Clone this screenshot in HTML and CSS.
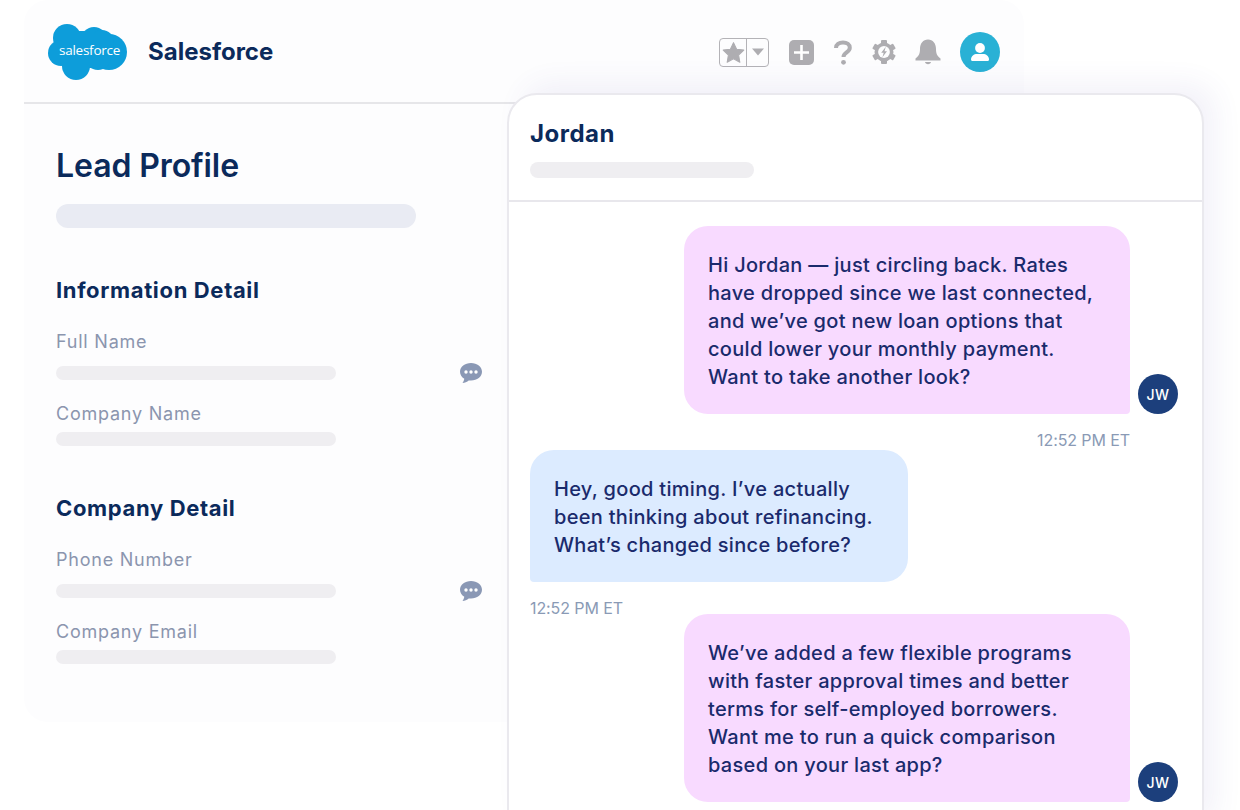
FILE: index.html
```html
<!DOCTYPE html>
<html lang="en">
<head>
<meta charset="utf-8">
<title>Lead Profile</title>
<link rel="stylesheet" href="styles.css">
</head>
<body>
<div class="stage">
  <div class="crm">
    <header class="crm-head">
      <div class="logo">
        <svg viewBox="0 0 80 56" width="80" height="56" aria-hidden="true"><g fill="#0d9dda"><circle cx="19" cy="14" r="14"/><circle cx="46" cy="16" r="13"/><circle cx="61" cy="28" r="18"/><circle cx="28" cy="42" r="14"/><circle cx="13" cy="29" r="13"/><circle cx="50" cy="33" r="13"/><circle cx="54" cy="18" r="12"/><rect x="19" y="7" width="27" height="37"/><rect x="14" y="12" width="40" height="30"/></g></svg>
        <span class="logo-word">salesforce</span>
      </div>
      <div class="brand">Salesforce</div>
      <nav class="tools">
        <div class="fav">
          <span class="fav-star"><svg viewBox="0 0 24 24" width="25" height="25"><path fill="#aeadb1" stroke="#aeadb1" stroke-width="1" stroke-linejoin="round" d="M12 2.500l3 6.300 6.900.9-5 4.800 1.200 6.900-6.100-3.300-6.100 3.300 1.200-6.900-5-4.800 6.900-.9z"/></svg></span>
          <span class="fav-drop"><svg viewBox="0 0 14 10" width="14" height="10"><path fill="#aeadb1" d="M1 1.500h12L7 8.500z"/></svg></span>
        </div>
        <svg class="tool-plus" viewBox="0 0 25 25" width="25" height="25"><rect width="25" height="25" rx="5" fill="#aeadb1"/><path d="M12.500 5v15M5 12.500h15" stroke="#fff" stroke-width="2.600"/></svg>
        <svg class="tool-help" viewBox="0 0 20 28" width="20" height="28"><path d="M3 10C3 6.300 6 4.500 10 4.500c4 0 6.800 1.900 6.800 5.300 0 4.600-6.300 4.700-6.300 9.200" fill="none" stroke="#aeadb1" stroke-width="4"/><circle cx="10.500" cy="24.300" r="2.400" fill="#aeadb1"/></svg>
        <svg class="tool-gear" viewBox="0 0 26 26" width="26" height="26"><g fill="#aeadb1"><rect x="10" y="1" width="6" height="24" rx="1"/><rect x="10" y="1" width="6" height="24" rx="1" transform="rotate(60 13 13)"/><rect x="10" y="1" width="6" height="24" rx="1" transform="rotate(120 13 13)"/></g><circle cx="13" cy="13" r="7.700" fill="none" stroke="#aeadb1" stroke-width="3.600"/><circle cx="13" cy="13" r="5.900" fill="#fdfdfe"/><path fill="#aeadb1" d="M14.800 7.800l-4.600 6h2.500l-1.300 4.400 4.600-6h-2.500z"/></svg>
        <svg class="tool-bell" viewBox="0 0 26 26" width="26" height="26"><path fill="#aeadb1" d="M13 .5c4.900 0 8 4 8 9.500 0 4.500 1 7 4.500 9.500v2H.5v-2C4 17 5 14.500 5 10 5 4.500 8.100.5 13 .5z"/><path fill="#aeadb1" d="M10 23h6c-.3 1.300-1.400 2.200-3 2.200s-2.700-.9-3-2.200z"/></svg>
        <span class="user"><svg viewBox="0 0 24 24" width="24" height="24"><circle cx="12" cy="8" r="4.900" fill="#fff"/><path fill="#fff" d="M3 19.500c0-3.500 3-5.500 6-5.500h6c3 0 6 2 6 5.500 0 .8-.5 1.500-1.500 1.500h-15C3.500 21 3 20.300 3 19.500z"/></svg></span>
      </nav>
    </header>
    <main class="profile">
      <h1 class="profile-title">Lead Profile</h1>
      <div class="bar bar-lead"></div>

      <h2 class="section first">Information Detail</h2>
      <div class="label first-label">Full Name</div>
      <div class="field">
        <div class="bar bar-field"></div>
        <svg class="note" viewBox="0 0 24 23" width="24" height="23"><path fill="#8a98b5" d="M12 1C5.900 1 1 4.900 1 9.800c0 2.900 1.700 5.400 4.300 7-.2 1.500-.9 3-1.800 4.200 2.200-.2 4.600-1.400 6.200-2.600.7.100 1.500.2 2.300.2 6.100 0 11-3.900 11-8.800S18.100 1 12 1z"/><circle cx="7" cy="10" r="1.700" fill="#fff"/><circle cx="12" cy="10" r="1.700" fill="#fff"/><circle cx="17" cy="10" r="1.700" fill="#fff"/></svg>
      </div>
      <div class="label">Company Name</div>
      <div class="bar bar-field tight"></div>

      <h2 class="section">Company Detail</h2>
      <div class="label first-label">Phone Number</div>
      <div class="field">
        <div class="bar bar-field"></div>
        <svg class="note" viewBox="0 0 24 23" width="24" height="23"><path fill="#8a98b5" d="M12 1C5.900 1 1 4.900 1 9.800c0 2.900 1.700 5.400 4.300 7-.2 1.500-.9 3-1.800 4.200 2.200-.2 4.600-1.400 6.200-2.600.7.100 1.500.2 2.300.2 6.100 0 11-3.900 11-8.800S18.100 1 12 1z"/><circle cx="7" cy="10" r="1.700" fill="#fff"/><circle cx="12" cy="10" r="1.700" fill="#fff"/><circle cx="17" cy="10" r="1.700" fill="#fff"/></svg>
      </div>
      <div class="label">Company Email</div>
      <div class="bar bar-field tight"></div>
    </main>
  </div>

  <section class="chat">
    <header class="chat-head">
      <div class="chat-name">Jordan</div>
      <div class="bar bar-sub"></div>
    </header>
    <div class="thread">
      <div class="row out">
        <div class="bubble bubble-out">Hi Jordan — just circling back. Rates<br>have dropped since we last connected,<br>and we’ve got new loan options that<br>could lower your monthly payment.<br>Want to take another look?</div>
        <span class="avatar">JW</span>
      </div>
      <div class="stamp stamp-out">12:52 PM ET</div>
      <div class="row in">
        <div class="bubble bubble-in">Hey, good timing. I’ve actually<br>been thinking about refinancing.<br>What’s changed since before?</div>
      </div>
      <div class="stamp stamp-in">12:52 PM ET</div>
      <div class="row out">
        <div class="bubble bubble-out">We’ve added a few flexible programs<br>with faster approval times and better<br>terms for self-employed borrowers.<br>Want me to run a quick comparison<br>based on your last app?</div>
        <span class="avatar">JW</span>
      </div>
    </div>
  </section>
</div>
</body>
</html>
```
FILE: styles.css
```css
* { box-sizing: border-box; }
html, body { margin: 0; height: 100%; overflow: hidden; background: #fff; }
body { font-family: Inter, "Liberation Sans", sans-serif; }

.stage { position: relative; width: 1240px; height: 810px; padding-left: 24px; overflow: hidden; }

.crm { width: 1000px; height: 722px; background: #fdfdfe; border-radius: 24px; }
.crm-head { display: flex; align-items: center; height: 104px; padding: 2px 24px 0; border-bottom: 2px solid #e6e6e9; }
.logo { position: relative; width: 80px; height: 56px; flex: none; }
.logo svg { display: block; }
.logo-word { position: absolute; left: 11px; top: 17px; color: #fff; font: 400 13.500px/18px "Open Sans", sans-serif; letter-spacing: -.25px; }
.brand { margin-left: 20px; color: #0b2a5b; font-size: 24px; font-weight: 700; line-height: 30px; }
.tools { display: flex; align-items: center; margin-left: auto; }
.fav { display: flex; width: 50px; height: 29px; border: 1.500px solid #b4b3b7; border-radius: 4px; }
.fav-star { display: flex; align-items: center; justify-content: center; width: 27px; border-right: 1.500px solid #b4b3b7; }
.fav-drop { display: flex; align-items: center; justify-content: center; flex: 1; }
.tool-plus { margin-left: 20px; }
.tool-help { margin-left: 19px; }
.tool-gear { margin-left: 18px; }
.tool-bell { margin-left: 18px; }
.user { display: flex; align-items: center; justify-content: center; width: 40px; height: 40px; margin-left: 19px; background: #29b1d5; border-radius: 50%; }

.profile { padding: 41px 32px 0; }
.profile-title { margin: 1px 0 -1px; color: #0b2a5b; font-size: 32px; font-weight: 600; line-height: 40px; letter-spacing: -.1px; }
.bar { background: #efeef1; }
.bar-lead { width: 360px; height: 24px; margin-top: 19px; background: #e9ebf3; border-radius: 12px; }
.section { margin: 48px 0 0; color: #0b2a5b; font-size: 22px; font-weight: 700; line-height: 28px; letter-spacing: .65px; }
.label { height: 24px; margin-top: 21px; padding-top: 1px; color: #8b95ae; font-size: 18px; line-height: 24px; letter-spacing: .77px; }
.first-label { margin-top: 25px; }
.field { display: flex; align-items: center; height: 14px; margin-top: 13px; }
.bar-field { width: 280px; height: 14px; border-radius: 7px; }
.tight { margin-top: 7px; }
.note { margin-left: 123px; flex: none; }

.chat { position: absolute; left: 507px; top: 93px; width: 697px; height: 740px; background: #fff; border: 2px solid #eae9ee; border-radius: 30px 30px 0 0; box-shadow: 14px -12px 28px -2px rgba(90, 70, 170, .07); }
.chat-head { height: 107px; padding: 23px 21px 0; border-bottom: 2px solid #e8e7ec; }
.chat-name { color: #0b2a5b; font-size: 24px; font-weight: 700; line-height: 32px; letter-spacing: .5px; }
.bar-sub { width: 224px; height: 16px; margin-top: 12px; border-radius: 8px; }

.thread { padding: 24px 24px 0 21px; }
.row { display: flex; align-items: flex-end; }
.out { justify-content: flex-end; gap: 8px; }
.bubble { padding: 25px 24px 23px; color: #1a2a6c; font-size: 20px; font-weight: 500; line-height: 28px; letter-spacing: .3px; white-space: nowrap; border-radius: 24px; }
.bubble-out { width: 446px; background: #f8daff; border-bottom-right-radius: 4px; }
.bubble-in { width: 378px; background: #dcebff; border-bottom-left-radius: 4px; }
.avatar { display: flex; align-items: center; justify-content: center; width: 40px; height: 40px; flex: none; color: #fff; font-size: 14px; font-weight: 500; letter-spacing: .5px; background: #1c3f7c; border-radius: 50%; }
.stamp { height: 20px; margin-top: 16px; color: #8a9ab5; font-size: 16px; line-height: 20px; letter-spacing: -.1px; }
.stamp-out { margin-right: 48px; text-align: right; }
.stamp-in { height: 16px; }
```
